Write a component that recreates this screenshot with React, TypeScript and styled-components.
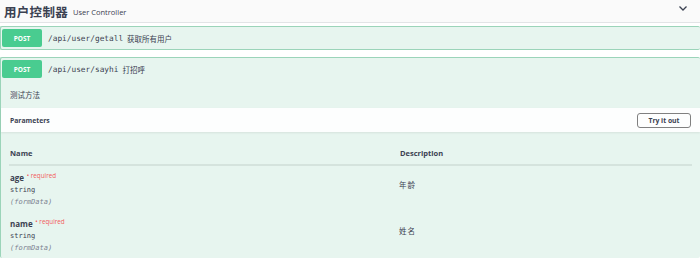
import React from "react"
import styled, { createGlobalStyle } from 'styled-components'

const GlobalStyle = createGlobalStyle`
    html, body {
        margin: 0;
        padding: 0;
        background: #ffffff;
    }
    body {
        font-family: "Open Sans", "Noto Sans CJK SC", sans-serif;
        color: #3b4151;
    }
`

const Page = styled.div`
    width: 700px;
    height: 280px;
    overflow: hidden;
`

const TagHeader = styled.div`
    height: 22px;
    display: flex;
    align-items: center;
    padding: 0 4px;
    background: #fafafa;
    border-bottom: 1px solid #e2e4e6;
    margin-bottom: 3px;
`

const TagTitle = styled.span`
    font-family: "Noto Sans CJK SC", sans-serif;
    font-size: 12.5px;
    font-weight: 700;
    color: #3b4151;
    letter-spacing: 0.3px;
`

const TagSub = styled.span`
    font-family: "Open Sans", sans-serif;
    font-size: 7.5px;
    color: #3b4151;
    margin-left: 5px;
    margin-top: 2px;
    flex: 1;
`

const Chevron = styled.svg`
    width: 10px;
    height: 10px;
    margin-right: 8px;
    margin-top: -6px;
`

const OpBlock = styled.div<{ $open?: boolean }>`
    border: 1px solid #9bd4b9;
    background: #e7f5ef;
    border-radius: 2px;
    margin-bottom: 7px;
    border-right: none;
    ${p => p.$open && 'border-bottom: none;'}
`

const Summary = styled.div`
    height: 22px;
    display: flex;
    align-items: center;
    padding: 0 1px;
`

const Method = styled.div`
    width: 40px;
    height: 18px;
    background: #49cc90;
    color: #fff;
    border-radius: 2px;
    display: flex;
    align-items: center;
    justify-content: center;
    font-family: "Open Sans", sans-serif;
    font-size: 6.5px;
    font-weight: 700;
`

const Path = styled.span`
    font-family: "DejaVu Sans Mono", monospace;
    font-size: 7.8px;
    font-weight: 400;
    color: #3b4151;
    margin-left: 6px;
`

const Summ = styled.span`
    font-family: "Noto Sans CJK SC", sans-serif;
    font-size: 7.5px;
    color: #3b4151;
    margin-left: 4px;
`

const OpDesc = styled.div`
    height: 28px;
    display: flex;
    align-items: center;
    padding: 0 9px;
    font-family: "Noto Sans CJK SC", sans-serif;
    font-size: 7.5px;
`

const ParamBar = styled.div`
    height: 24px;
    background: #fdfefe;
    display: flex;
    align-items: center;
    justify-content: space-between;
    padding: 0 9px;
    box-shadow: 0 1px 2px rgba(0, 0, 0, 0.08);
`

const ParamTitle = styled.span`
    font-family: "Open Sans", sans-serif;
    font-size: 6.8px;
    font-weight: 700;
`

const TryButton = styled.button`
    width: 54px;
    height: 15px;
    border: 1px solid #808080;
    border-radius: 3px;
    background: transparent;
    font-family: "Open Sans", sans-serif;
    font-size: 6.8px;
    font-weight: 700;
    color: #3b4151;
    padding: 0;
`

const Table = styled.div`
    margin: 16px 8px 0 8px;
    display: grid;
    grid-template-columns: 390px 1fr;
`

const HeadCell = styled.div`
    font-family: "Open Sans", sans-serif;
    font-size: 7.5px;
    font-weight: 700;
    padding: 0 1px 6px;
    border-bottom: 2px solid #d5e3dd;
`

const NameCell = styled.div`
    padding: 4px 1px 4px;
    display: flex;
    flex-direction: column;
`

const ParamName = styled.div`
    font-family: "Open Sans", sans-serif;
    font-size: 8px;
    font-weight: 700;
    line-height: 12px;
    color: #3b4151;
`

const Required = styled.span`
    font-size: 6.3px;
    font-weight: 400;
    color: #f25c5c;
    vertical-align: 3px;
    margin-left: 1px;
`

const Mono = styled.div<{ $muted?: boolean }>`
    font-family: "DejaVu Sans Mono", monospace;
    font-size: 7px;
    line-height: 12px;
    color: ${p => (p.$muted ? '#7b8290' : '#3b4151')};
    font-style: ${p => (p.$muted ? 'italic' : 'normal')};
`

const DescCell = styled.div`
    padding: 13px 0 0;
    font-family: "Noto Sans CJK SC", sans-serif;
    font-size: 7.5px;
    letter-spacing: 1px;
`

type Param = { name: string, desc: string }

const params: Param[] = [
    { name: 'age', desc: '年龄' },
    { name: 'name', desc: '姓名' },
]

const App = () => {
    return (
        <Page>
            <GlobalStyle />
            <TagHeader>
                <TagTitle>用户控制器</TagTitle>
                <TagSub>User Controller</TagSub>
                <Chevron viewBox="0 0 10 10">
                    <path d="M1.5 3.5 L5 7 L8.5 3.5" fill="none" stroke="#3b4151" strokeWidth="1.3" />
                </Chevron>
            </TagHeader>
            <OpBlock>
                <Summary>
                    <Method>POST</Method>
                    <Path>/api/user/getall</Path>
                    <Summ>获取所有用户</Summ>
                </Summary>
            </OpBlock>
            <OpBlock $open>
                <Summary>
                    <Method>POST</Method>
                    <Path>/api/user/sayhi</Path>
                    <Summ>打招呼</Summ>
                </Summary>
                <OpDesc>测试方法</OpDesc>
                <ParamBar>
                    <ParamTitle>Parameters</ParamTitle>
                    <TryButton>Try it out</TryButton>
                </ParamBar>
                <Table>
                    <HeadCell>Name</HeadCell>
                    <HeadCell>Description</HeadCell>
                    {params.map(p => (
                        <React.Fragment key={p.name}>
                            <NameCell>
                                <ParamName>{p.name}<Required> • required</Required></ParamName>
                                <Mono>string</Mono>
                                <Mono $muted>(formData)</Mono>
                            </NameCell>
                            <DescCell>{p.desc}</DescCell>
                        </React.Fragment>
                    ))}
                </Table>
            </OpBlock>
        </Page>
    )
}

export default App
